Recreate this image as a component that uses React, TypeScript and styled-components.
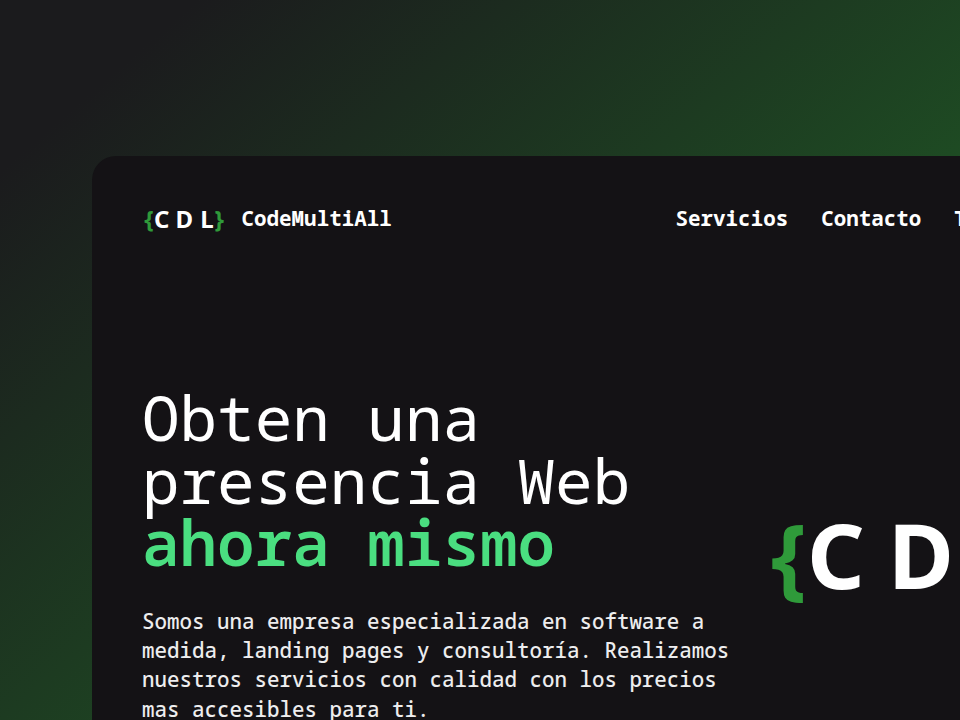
import React from "react";
import styled, { createGlobalStyle } from "styled-components";

const Global = createGlobalStyle`
  * { box-sizing: border-box; }
  body { margin: 0; overflow: hidden; background: #1b1b1d; }
`;

const Backdrop = styled.main`
  width: 960px;
  height: 720px;
  overflow: hidden;
  padding: 156px 0 0 91.5px;
  background: linear-gradient(139deg, #1b1b1d 11%, #1e4b23 64%);
`;

const Window = styled.div`
  width: 1180px;
  height: 800px;
  padding: 44px 50.5px 0;
  border-radius: 24px;
  background: #141215;
  color: #fff;
  font-family: "Noto Sans Mono", "DejaVu Sans Mono", monospace;
`;

const Header = styled.header`
  display: flex;
  align-items: center;
  height: 38px;
`;

const Brand = styled.a`
  display: flex;
  align-items: center;
  width: 533.6px;
  padding: 0 0 1.4px 1.8px;
  font-size: 20.85px;
  font-weight: 700;
`;

const Logo = styled.svg<{ $width: number }>`
  flex: none;
  display: block;
  width: ${(p) => p.$width}px;
  height: auto;
  font-family: "Noto Sans", sans-serif;
  font-weight: 700;
  font-size: 90px;
`;

const BrandName = styled.span`
  margin: 0 0 1px 17.8px;
`;

const Nav = styled.nav`
  display: flex;
  gap: 33px;
  padding-bottom: 3px;
  font-size: 20.85px;
  font-weight: 700;
`;

const Hero = styled.section`
  display: flex;
  align-items: flex-start;
  padding-top: 148px;
`;

const Copy = styled.div`
  flex: none;
  width: 627.7px;
`;

const Title = styled.h1`
  margin: 0;
  font-size: 62.6px;
  line-height: 62.6px;
  font-weight: 400;
  white-space: nowrap;
`;

const Accent = styled.span`
  color: #4ade80;
  font-weight: 600;
`;

const Text = styled.p`
  margin: 33px 0 0;
  font-size: 20.84px;
  line-height: 29.3px;
  font-weight: 500;
  color: #ededee;
  white-space: nowrap;
`;

const Mark = styled.div`
  padding-top: 118px;
`;

function CdlLogo({ width }: { width: number }) {
  return (
    <Logo $width={width} viewBox="0 0 300 100" overflow="visible">
      <text x="1" y="85" fill="#2f9a3a">{"{"}</text>
      <text x="37" y="85" fill="#fff">C</text>
      <text x="118" y="85" fill="#fff">D</text>
      <text x="210.5" y="85" fill="#fff">L</text>
      <text x="264" y="85" fill="#2f9a3a">{"}"}</text>
    </Logo>
  );
}

export default function App() {
  return (
    <>
      <Global />
      <Backdrop>
        <Window>
          <Header>
            <Brand>
              <CdlLogo width={80} />
              <BrandName>CodeMultiAll</BrandName>
            </Brand>
            <Nav>
              <span>Servicios</span>
              <span>Contacto</span>
              <span>Trabajos</span>
            </Nav>
          </Header>
          <Hero>
            <Copy>
              <Title>
                Obten una<br />presencia Web<br /><Accent>ahora mismo</Accent>
              </Title>
              <Text>
                Somos una empresa especializada en software a<br />
                medida, landing pages y consultoría. Realizamos<br />
                nuestros servicios con calidad con los precios<br />
                mas accesibles para ti.
              </Text>
            </Copy>
            <Mark><CdlLogo width={300} /></Mark>
          </Hero>
        </Window>
      </Backdrop>
    </>
  );
}
